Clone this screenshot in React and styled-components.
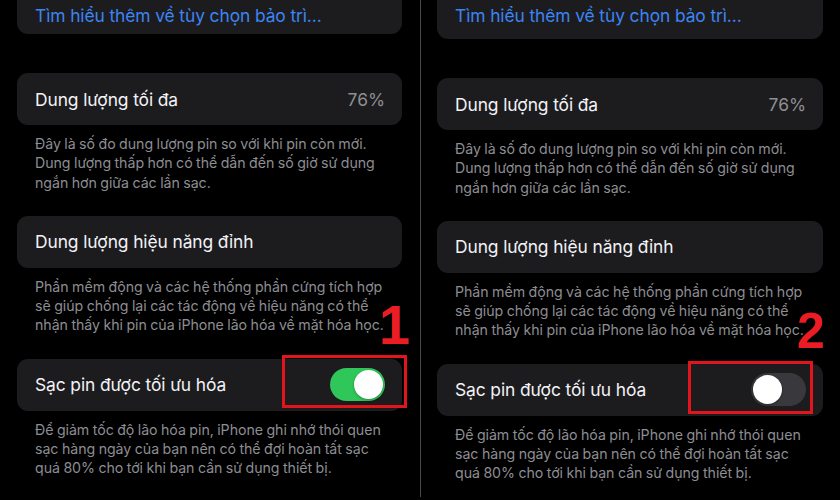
import styled, { createGlobalStyle } from 'styled-components';

const GlobalStyle = createGlobalStyle`
  html, body {
    margin: 0;
    padding: 0;
    background: #000;
  }
  body {
    font-family: Inter, "Noto Sans", sans-serif;
    -webkit-font-smoothing: antialiased;
  }
`;

const Screen = styled.div`
  display: flex;
  align-items: flex-start;
  width: 840px;
  height: 500px;
  overflow: hidden;
  background: #000;
`;

const Divider = styled.div`
  flex-shrink: 0;
  width: 1px;
  height: 497px;
  background: #4a4a4c;
`;

const Panel = styled.div`
  flex-shrink: 0;
  width: ${({ $width }) => $width}px;
  box-sizing: border-box;
  padding: 0 ${({ $padRight }) => $padRight}px 0 ${({ $padLeft }) => $padLeft}px;
`;

const Card = styled.div`
  position: relative;
  display: flex;
  align-items: center;
  justify-content: space-between;
  height: 52px;
  box-sizing: border-box;
  padding: 0 17px 0 18px;
  background: #1c1c1e;
  border-radius: 11px;
`;

const TopCard = styled(Card)`
  height: ${({ $height }) => $height}px;
  align-items: flex-end;
  padding-bottom: ${({ $height }) => $height - 26}px;
  border-radius: 0 0 11px 11px;
  margin-bottom: 39px;
`;

const Link = styled.span`
  color: #3c84f3;
  font-size: 17.4px;
  letter-spacing: -0.1px;
`;

const Label = styled.span`
  color: #f2f2f7;
  font-size: 17.4px;
  letter-spacing: -0.1px;
`;

const Value = styled.span`
  color: #8e8e93;
  font-size: 17.4px;
`;

const Footer = styled.p`
  margin: 0 0 24px 0;
  padding: 9px 14px 0 18px;
  color: #8d8d92;
  font-size: 14.2px;
  line-height: 19.3px;
  letter-spacing: -0.05px;
  word-spacing: -0.45px;
`;

const Switch = styled.div`
  width: 55px;
  height: 33px;
  border-radius: 17px;
  background: ${({ $on }) => ($on ? '#30c75a' : '#39393d')};
  display: flex;
  align-items: center;
  justify-content: ${({ $on }) => ($on ? 'flex-end' : 'flex-start')};
  padding: 0 2px;
  box-sizing: border-box;
`;

const Knob = styled.div`
  width: 29px;
  height: 29px;
  border-radius: 50%;
  background: #fff;
  box-shadow: 0 1px 3px rgba(0, 0, 0, 0.3);
`;

const Highlight = styled.div`
  position: absolute;
  left: ${({ $left }) => $left}px;
  top: ${({ $top }) => $top}px;
  width: 125px;
  height: 53px;
  box-sizing: border-box;
  border: 3px solid #e3151c;
  pointer-events: none;
`;

const Step = styled.span`
  position: absolute;
  left: ${({ $left }) => $left}px;
  top: ${({ $top }) => $top}px;
  color: #ec1c24;
  font-family: "Liberation Sans", Arial, sans-serif;
  font-weight: 700;
  font-size: ${({ $size }) => $size}px;
  line-height: 1;
`;

function Settings({ on, step, topHeight, highlight, stepPos, width, padLeft, padRight }) {
  return (
    <Panel $width={width} $padLeft={padLeft} $padRight={padRight}>
      <TopCard $height={topHeight}>
        <Link>Tìm hiểu thêm về tùy chọn bảo trì...</Link>
      </TopCard>

      <Card>
        <Label>Dung lượng tối đa</Label>
        <Value>76%</Value>
      </Card>
      <Footer>
        Đây là số đo dung lượng pin so với khi pin còn mới. Dung lượng thấp hơn có thể dẫn đến số giờ sử dụng
        ngắn hơn giữa các lần sạc.
      </Footer>

      <Card>
        <Label>Dung lượng hiệu năng đỉnh</Label>
      </Card>
      <Footer>
        Phần mềm động và các hệ thống phần cứng tích hợp sẽ giúp chống lại các tác động về hiệu năng có thể
        nhận thấy khi pin của iPhone lão hóa về mặt hóa học.
      </Footer>

      <Card>
        <Label>Sạc pin được tối ưu hóa</Label>
        <Switch $on={on}>
          <Knob />
        </Switch>
        <Highlight $left={highlight.left} $top={highlight.top} />
        <Step $left={stepPos.left} $top={stepPos.top} $size={stepPos.size}>
          {step}
        </Step>
      </Card>
      <Footer>
        Để giảm tốc độ lão hóa pin, iPhone ghi nhớ thói quen sạc hàng ngày của bạn nên có thể đợi hoàn tất sạc
        quá 80% cho tới khi bạn cần sử dụng thiết bị.
      </Footer>
    </Panel>
  );
}

export default function App() {
  return (
    <>
      <GlobalStyle />
      <Screen>
        <Settings
          on
          step="1"
          topHeight={34}
          highlight={{ left: 265, top: -4 }}
          stepPos={{ left: 362, top: -62, size: 56 }}
          width={420}
          padLeft={17}
          padRight={18}
        />
        <Divider />
        <Settings
          on={false}
          step="2"
          topHeight={39}
          highlight={{ left: 251, top: -3 }}
          stepPos={{ left: 360, top: -58, size: 50 }}
          width={419}
          padLeft={16}
          padRight={17}
        />
      </Screen>
    </>
  );
}
